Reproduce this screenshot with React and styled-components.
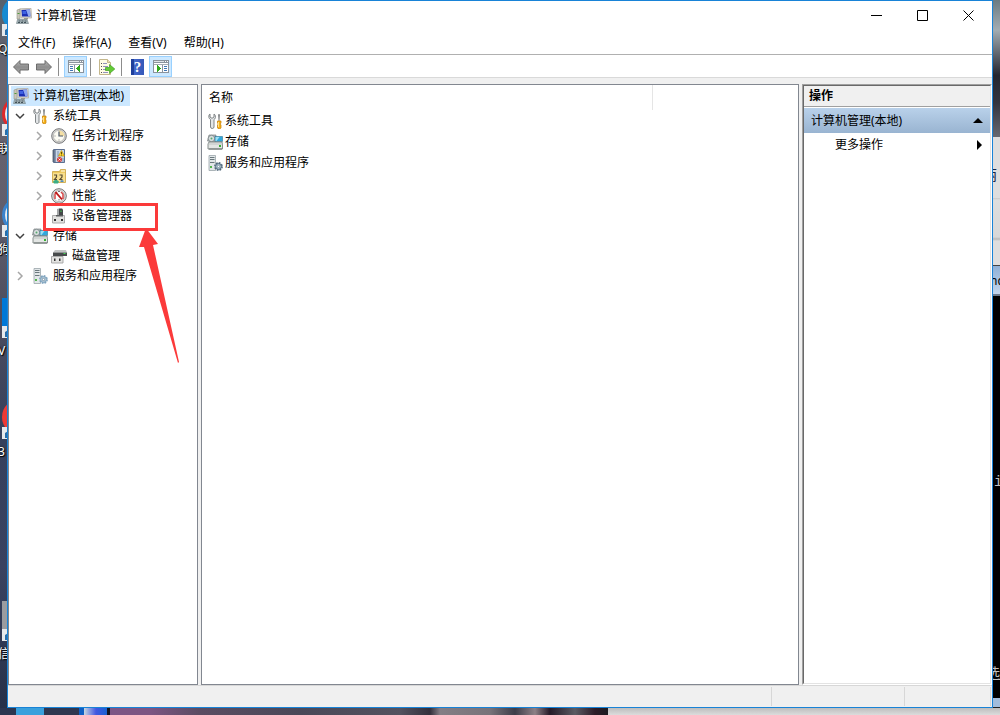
import React, { useState } from "react";
import styled, { createGlobalStyle, css } from "styled-components";

/* ---------- icons ---------- */

const ComputerIcon = () => (
  <Icon viewBox="0 0 16 16" aria-hidden="true">
    <path d="M1 2l3-1v10H1z" fill="#c9c6b8" stroke="#96948a" strokeWidth=".6" />
    <path d="M1.500 5h2v1h-2z" fill="#4c9a3d" />
    <path d="M4 .8L15 .3l.6 9.700H5z" fill="#dedbd0" stroke="#aaa89c" strokeWidth=".7" />
    <path d="M5.500 2L14 1.500l.4 7H6z" fill="#1b2fb4" />
    <path d="M10 1.800l4-.3.4 7h-2z" fill="#8fa8f0" />
    <path d="M6.500 3H10l.5 3h-4z" fill="#3f62e2" />
    <path d="M8 10h4v1.500H8z" fill="#9a988c" />
    <path d="M1.500 11.500H11l1.500 4H.5z" fill="#a9b8bd" stroke="#6d7d82" strokeWidth=".6" />
    <path d="M2.500 13h8M2 14.500h9" stroke="#44535a" strokeDasharray="2 1" />
  </Icon>
);

const ToolsIcon = () => (
  <Icon viewBox="0 0 16 16" aria-hidden="true">
    <path
      d="M3 1v3l2 1.300L7 4V1c2 1.300 2 4.300 0 5.500V14c0 2-3.500 2-3.500 0V6.500C1.300 5.300 1.300 2 3 1z"
      fill="#e3e6e8"
      stroke="#74797c"
      strokeWidth=".9"
    />
    <path d="M11.500 1h1l.5 1-.5 6h-1L11 2z" fill="#8a8d8f" />
    <path
      d="M10.500 8h3.500v2l-.8 1 .8 1v3c0 1-3.500 1-3.500 0v-3l.8-1-.8-1z"
      fill="#f6b21b"
      stroke="#c47b05"
      strokeWidth=".7"
    />
    <path d="M11.500 9v5" stroke="#ffe28a" />
  </Icon>
);

const ClockIcon = () => (
  <Icon viewBox="0 0 16 16" aria-hidden="true">
    <circle cx="8" cy="8" r="7.300" fill="#d6d6d4" stroke="#77787a" />
    <circle cx="8" cy="8" r="5.600" fill="#fdfcf4" stroke="#a3a3a1" strokeWidth=".6" />
    <path d="M8 8V2.500A5.500 5.500 0 0 1 13.500 8z" fill="#f4dfa4" />
    <path d="M8 3.500V8h4" fill="none" stroke="#4a5668" strokeWidth="1.200" />
    <path d="M3.500 8h1M8 11.500v1" stroke="#7b7b7b" />
  </Icon>
);

const EventIcon = () => (
  <Icon viewBox="0 0 16 16" aria-hidden="true">
    <path d="M2.500 1.500h11v13h-11z" fill="#8697b4" stroke="#5c6f90" />
    <path d="M5 2h8v12H5z" fill="#cbd8e6" />
    <path d="M6 4h2M6 6h2M6 8h2M11 11h2M11 13h2" stroke="#6887ae" strokeWidth=".8" />
    <path d="M1 3h3M1 5h3M1 7h3M1 9h3M1 11h3M1 13h3" stroke="#4d5968" strokeWidth=".8" />
    <path d="M10.500 2.500l3 5.500h-6z" fill="#ffd735" stroke="#b98b00" strokeWidth=".6" />
    <path d="M10.500 4v2M10.500 6.500v1" stroke="#3d3000" strokeWidth=".8" />
    <circle cx="8.500" cy="11.500" r="2.500" fill="#d83a35" />
    <path d="M7.500 10.500l2 2m0-2l-2 2" stroke="#fff" strokeWidth=".8" />
  </Icon>
);

const SharedIcon = () => (
  <Icon viewBox="0 0 16 16" aria-hidden="true">
    <path d="M1.500 3.500h7l1-2h5v13h-13z" fill="#efcb62" stroke="#c9a343" strokeWidth=".8" />
    <path d="M10 2.500h4v1h-4z" fill="#fffbe8" />
    <path d="M2 5h12v9H2z" fill="#f8df8e" />
    <path d="M3 7h2.500v2L3.500 11.500H6M8.500 7H11v2l-2 2.500h2.500" fill="none" stroke="#574c35" strokeWidth="1.200" />
    <path d="M2 13.500l2-1.500h2l2 1.500-1 2H3z" fill="#3bad86" />
    <path d="M9 13l2-1 2 1-1 1h-2z" fill="#4f8bc4" />
  </Icon>
);

const PerformanceIcon = () => (
  <Icon viewBox="0 0 16 16" aria-hidden="true">
    <circle cx="8" cy="8" r="7.300" fill="#e5e5e5" stroke="#727272" />
    <circle cx="8" cy="8" r="5.600" fill="#fff" stroke="#979797" strokeWidth=".6" />
    <path d="M4 11V6l2-2M12 11V6l-2-2" fill="none" stroke="#d34646" strokeWidth="1.500" />
    <path d="M4.500 4l6.500 7.500" stroke="#bc1818" strokeWidth="1.900" />
    <path d="M7 3.500h2M8 11v1.500" stroke="#777" />
  </Icon>
);

const DeviceIcon = () => (
  <Icon viewBox="0 0 16 16" aria-hidden="true">
    <path d="M6 1l2-.5V8H6z" fill="#a4a7a8" />
    <path d="M8 .5h3l1 1V9H8z" fill="#45484a" />
    <path d="M9.500 2.500h1v1.500h-1z" fill="#42d652" />
    <path d="M1.500 7.500h12v7.500h-12z" fill="#e2e2e0" stroke="#a3a3a3" strokeWidth=".9" />
    <path d="M5 7h7v1.500H5z" fill="#5c5f61" />
    <path d="M3 11h2v2H3zM10 11h2v2h-2z" fill="#343434" />
  </Icon>
);

const StorageIcon = () => (
  <Icon viewBox="0 0 16 16" aria-hidden="true">
    <path d="M.5 7L2 1h7l-1 7z" fill="#b4bbbd" stroke="#7c8284" strokeWidth=".7" />
    <circle cx="4.500" cy="4.500" r="3.200" fill="#d9dfdf" stroke="#758083" strokeWidth=".8" />
    <circle cx="4.500" cy="4.500" r="1" fill="#58a96e" />
    <path d="M8 2.500h7.500v5H8z" fill="#30a8dc" stroke="#347391" strokeWidth=".6" />
    <path d="M8.500 3h4l-3 4h-1z" fill="#9ce0f4" />
    <path d="M1 10l1-2h13l.5 2v5H1z" fill="#e3e6e4" stroke="#7b8382" strokeWidth=".9" />
    <path d="M1.500 10h14" stroke="#c0c5c4" />
    <path d="M12 11h2v2h-2z" fill="#35af32" />
    <path d="M2 15h13" stroke="#6d7472" />
  </Icon>
);

const DiskIcon = () => (
  <Icon viewBox="0 0 16 16" aria-hidden="true">
    <path d="M4 2h11l1 2.500H2z" fill="#c2c4c4" />
    <path d="M2 4.500h14V8H2z" fill="#484b4c" />
    <path d="M12.500 5h2v1h-2z" fill="#42d652" />
    <path d="M.5 8.500h11.500v6.500H.5z" fill="#e3e3e1" stroke="#a3a3a3" strokeWidth=".9" />
    <path d="M3 10.500h1.500V13H3zM8 10.500h1.500V13H8z" fill="#343434" />
  </Icon>
);

const ServiceIcon = ({ dark }) => (
  <Icon viewBox="0 0 16 16" aria-hidden="true">
    <path d="M2 .5h6.500v15H2z" fill="#e2e7e9" stroke="#9aa5a9" strokeWidth=".8" />
    <path d="M3 2.500h4.500M3 4.500h4.500M3 7.500h4.500" stroke="#6a787d" />
    <path d="M3 11h2v2H3z" fill="#52b44d" />
    <circle
      cx="11.500"
      cy="11.500"
      r="3.600"
      fill="#b3cbdc"
      stroke={dark ? "#4f6679" : "#7ea2bd"}
      strokeWidth="1.600"
      strokeDasharray="1.700 1.100"
    />
    <circle cx="11.500" cy="11.500" r="2.800" fill="#c5d8e4" stroke={dark ? "#4f6679" : "#7ea2bd"} />
    <circle cx="11.500" cy="11.500" r="1.200" fill="#fff" stroke="#56748a" strokeWidth=".7" />
  </Icon>
);

const ArrowIcon = ({ flip }) => (
  <Icon viewBox="0 0 16 16" aria-hidden="true">
    <defs>
      <linearGradient id="nav-arrow" x2="0" y2="1">
        <stop offset="0" stopColor="#b8b8b8" />
        <stop offset=".5" stopColor="#8e8e8e" />
        <stop offset="1" stopColor="#a9a9a9" />
      </linearGradient>
    </defs>
    <path
      d={
        flip
          ? "M15.500 8L9 1.500V5H.5v6H9v3.500z"
          : "M.5 8L7 1.500V5h8.500v6H7v3.500z"
      }
      fill="url(#nav-arrow)"
      stroke="#626262"
      strokeWidth=".9"
    />
  </Icon>
);

const PaneIcon = ({ right }) => (
  <Icon viewBox="0 0 16 16" shapeRendering="crispEdges" aria-hidden="true">
    <path d="M0 1h16v13H0z" fill="#8a939d" />
    <path d="M1 4h14v9H1z" fill="#fff" />
    <path d="M1 2h10v1H1z" fill="#dfe4e8" />
    <path d="M12 2h1v1h-1zM14 2h1v1h-1z" fill="#fff" />
    <path d="M1 5h14v1H1z" fill="#a5adb5" />
    {right ? (
      <>
        <path d="M9 6h1v7H9z" fill="#8a939d" />
        <path d="M11 7h3v1h-3zM11 9h3v1h-3zM11 11h3v1h-3z" fill="#3f76b5" />
        <path d="M4 6l4 3.500L4 13z" fill="#30a91c" />
      </>
    ) : (
      <>
        <path d="M6 6h1v7H6z" fill="#8a939d" />
        <path d="M2 7h3v1H2zM2 9h3v1H2zM2 11h3v1H2z" fill="#3f76b5" />
        <path d="M12 6L8 9.500l4 3.500z" fill="#30a91c" />
      </>
    )}
  </Icon>
);

const ExportIcon = () => (
  <Icon viewBox="0 0 16 16" aria-hidden="true">
    <path d="M.5.5h8l3 3v12H.5z" fill="#fffbe5" stroke="#c4b78c" />
    <path d="M8.500.5v3h3" fill="#e9dfb9" stroke="#c4b78c" />
    <path d="M2 4.500h1M2 7.500h1M2 10.500h1M2 13.500h1" stroke="#515151" />
    <path d="M4 4.500h4M4 7.500h5M4 10.500h4M4 13.500h5" stroke="#9392bb" />
    <path d="M6.500 8.500h4V5.500L15.800 10l-5.300 4.500v-3h-4z" fill="#63cb36" stroke="#3f9e21" strokeWidth=".7" />
  </Icon>
);

const Chevron = ({ open }) => (
  <ChevronSvg viewBox="0 0 10 10" aria-hidden="true">
    {open ? (
      <path d="M1 3l4 4 4-4" stroke="#404040" />
    ) : (
      <path d="M3 1l4 4-4 4" stroke="#a6a6a6" />
    )}
  </ChevronSvg>
);

/* ---------- data ---------- */

const menus = ["文件(F)", "操作(A)", "查看(V)", "帮助(H)"];

const tree = [
  {
    name: "系统工具",
    icon: <ToolsIcon />,
    open: true,
    children: [
      { name: "任务计划程序", icon: <ClockIcon />, more: true },
      { name: "事件查看器", icon: <EventIcon />, more: true },
      { name: "共享文件夹", icon: <SharedIcon />, more: true },
      { name: "性能", icon: <PerformanceIcon />, more: true },
      { name: "设备管理器", icon: <DeviceIcon />, marked: true },
    ],
  },
  {
    name: "存储",
    icon: <StorageIcon />,
    open: true,
    children: [{ name: "磁盘管理", icon: <DiskIcon /> }],
  },
  { name: "服务和应用程序", icon: <ServiceIcon />, more: true },
];

const rows = [
  { name: "系统工具", icon: <ToolsIcon /> },
  { name: "存储", icon: <StorageIcon /> },
  { name: "服务和应用程序", icon: <ServiceIcon dark /> },
];

const shortcuts = [
  { top: -4, name: "Q", color: "#168bd2" },
  { top: 96, name: "联", color: "#dd2a2c", ring: true },
  { top: 197, name: "狗", color: "#3d83cb", ring: true },
  { top: 298, name: "V", color: "#0078d7", square: true },
  { top: 399, name: "3", color: "#ee3a35" },
  { top: 601, name: "信", color: "#9b9ca0", square: true },
];

/* ---------- parts ---------- */

const TreeNode = ({ node, level }) => {
  const [open, setOpen] = useState(!!node.open);

  return (
    <li>
      <TreeRow $level={level}>
        <Toggle
          type="button"
          aria-label={node.name}
          disabled={!node.children && !node.more}
          onClick={() => setOpen(!open)}
        >
          {(node.children || node.more) && (
            <Chevron open={open && !!node.children} />
          )}
        </Toggle>
        <TreeLabel type="button">
          {node.icon}
          <span>{node.name}</span>
        </TreeLabel>
        {node.marked && (
          <>
            <MarkBox />
            <MarkArrow viewBox="0 0 42 136" aria-hidden="true">
              <path d="M8 0L20 16 15 17 41 134 40 135 6 19 1 19z" fill="#fb3a3a" />
            </MarkArrow>
          </>
        )}
      </TreeRow>
      {open && node.children && (
        <TreeList>
          {node.children.map((child) => (
            <TreeNode key={child.name} node={child} level={level + 1} />
          ))}
        </TreeList>
      )}
    </li>
  );
};

const App = () => {
  return (
    <>
      <GlobalStyle />
      <Desktop>
        <LeftEdge>
          {shortcuts.map((s) => (
            <Shortcut key={s.name} style={{ top: s.top }}>
              <ShortcutArt $color={s.color} $ring={s.ring} $square={s.square} />
              <ShortcutBadge viewBox="0 0 12 12" aria-hidden="true">
                <path d="M0 0h12v12H0z" fill="#e6e9ec" />
                <path d="M3 11V6l3-2h5v3H7L5 11z" fill="#2a6da8" />
              </ShortcutBadge>
              <ShortcutName>{s.name}</ShortcutName>
            </Shortcut>
          ))}
        </LeftEdge>

        <Window>
          <TitleBar>
            <ComputerIcon />
            <Title>计算机管理</Title>
            <Caption type="button" aria-label="最小化">
              <CaptionSvg viewBox="0 0 11 11">
                <path d="M0 5.500h11" />
              </CaptionSvg>
            </Caption>
            <Caption type="button" aria-label="最大化">
              <CaptionSvg viewBox="0 0 11 11">
                <path d="M.5.5h10v10H.5z" />
              </CaptionSvg>
            </Caption>
            <Caption type="button" aria-label="关闭">
              <CaptionSvg viewBox="0 0 11 11">
                <path d="M.5.5l10 10m0-10l-10 10" />
              </CaptionSvg>
            </Caption>
          </TitleBar>

          <MenuBar>
            {menus.map((m) => (
              <MenuButton key={m} type="button">
                {m}
              </MenuButton>
            ))}
          </MenuBar>

          <ToolBar>
            <ToolButton type="button" aria-label="后退">
              <ArrowIcon />
            </ToolButton>
            <ToolButton type="button" aria-label="前进">
              <ArrowIcon flip />
            </ToolButton>
            <Separator />
            <ToolButton type="button" aria-label="控制台树" $active>
              <PaneIcon />
            </ToolButton>
            <Separator />
            <ToolButton type="button" aria-label="导出列表">
              <ExportIcon />
            </ToolButton>
            <Separator />
            <ToolButton type="button" aria-label="帮助">
              <HelpBadge aria-hidden="true">?</HelpBadge>
            </ToolButton>
            <ToolButton type="button" aria-label="操作窗格" $active>
              <PaneIcon right />
            </ToolButton>
          </ToolBar>

          <Panes>
            <TreePane aria-label="控制台树">
              <RootLabel type="button">
                <ComputerIcon />
                <span>计算机管理(本地)</span>
              </RootLabel>
              <TreeList>
                {tree.map((node) => (
                  <TreeNode key={node.name} node={node} level={0} />
                ))}
              </TreeList>
            </TreePane>

            <ListPane>
              <Table>
                <thead>
                  <tr>
                    <HeadCell scope="col">名称</HeadCell>
                    <td />
                  </tr>
                </thead>
                <tbody>
                  {rows.map((row) => (
                    <tr key={row.name}>
                      <Cell>
                        <CellBody>
                          {row.icon}
                          {row.name}
                        </CellBody>
                      </Cell>
                      <td />
                    </tr>
                  ))}
                </tbody>
              </Table>
            </ListPane>

            <ActionPane>
              <ActionInner>
                <ActionTitle>操作</ActionTitle>
                <ActionGroup type="button">
                  计算机管理(本地)
                  <Triangle viewBox="0 0 10 10" aria-hidden="true">
                    <path d="M5 2l5 5H0z" />
                  </Triangle>
                </ActionGroup>
                <ActionItem type="button">
                  更多操作
                  <Triangle viewBox="0 0 10 10" aria-hidden="true">
                    <path d="M3 0l5 5-5 5z" />
                  </Triangle>
                </ActionItem>
              </ActionInner>
            </ActionPane>
          </Panes>

          <StatusBar>
            <StatusMain />
            <StatusCell $width={133} />
            <StatusCell $width={86} />
          </StatusBar>
        </Window>

        <RightEdge>
          <Photo />
          <BackPage>
            <PageChar>丽</PageChar>
          </BackPage>
          <ConsoleTitle>
            <span>nd</span>
          </ConsoleTitle>
          <ConsoleBody>
            <span>i</span>
            <u>选</u>
          </ConsoleBody>
          <ConsoleFoot />
        </RightEdge>

        <BottomEdge>
          <BottomArt />
        </BottomEdge>
      </Desktop>
    </>
  );
};

/* ---------- styles ---------- */

const GlobalStyle = createGlobalStyle`
  * {
    box-sizing: border-box;
  }
  body {
    margin: 0;
    font-family: "Noto Sans", "Noto Sans CJK SC", sans-serif;
    font-size: 12px;
    line-height: 20px;
    color: #000;
  }
  button {
    font: inherit;
    color: inherit;
    background: none;
    border: none;
    padding: 0;
    text-align: left;
  }
`;

const Icon = styled.svg`
  display: block;
  flex: none;
  width: 16px;
  height: 16px;
`;

const Desktop = styled.div`
  display: grid;
  grid-template-columns: 7px minmax(0, 1fr) 7px;
  grid-template-rows: 1fr 7px;
  min-height: 100vh;
  background: #2f3950;
`;

const LeftEdge = styled.div`
  position: relative;
  overflow: hidden;
  background: linear-gradient(
    #56616d,
    #6a6570 12%,
    #605e6c 30%,
    #4c4c5e 45%,
    #35405c 62%,
    #3a4260 80%,
    #273149
  );
`;

/* desktop shortcuts, mostly covered by the window */
const Shortcut = styled.div`
  position: absolute;
  left: 2px;
  width: 40px;
`;

const ShortcutArt = styled.div`
  width: 36px;
  height: 36px;
  border-radius: ${(p) => (p.$square ? "0" : "50%")};
  background: ${(p) => (p.$ring ? "#e8edf2" : p.$color)};
  border: ${(p) => (p.$ring ? "3px" : "0")} solid ${(p) => p.$color};
`;

const ShortcutBadge = styled.svg`
  position: absolute;
  left: 0;
  top: 28px;
  width: 12px;
  height: 12px;
`;

const ShortcutName = styled.div`
  margin: 7px 0 0 -4px;
  line-height: 20px;
  color: #fff;
  text-shadow: 1px 1px 1px #000, 0 0 2px #000;
`;

const Window = styled.main`
  display: flex;
  flex-direction: column;
  min-width: 0;
  border: 1px solid #1883d7;
  background: #fff;
`;

const TitleBar = styled.header`
  display: flex;
  align-items: center;
  height: 30px;
  padding-left: 8px;
`;

const Title = styled.h1`
  flex: 1;
  margin: 0 0 0 4px;
  font-size: 12px;
  font-weight: 400;
`;

const Caption = styled.button`
  display: flex;
  align-items: center;
  justify-content: center;
  width: 46px;
  height: 30px;
  padding: 0 1px 1px 0;

  &:hover {
    background: #e5e5e5;
  }
`;

const CaptionSvg = styled.svg`
  width: 11px;
  height: 11px;
  fill: none;
  stroke: #000;
  stroke-width: 1;
`;

const MenuBar = styled.nav`
  display: flex;
  align-items: center;
  gap: 1px;
  height: 24px;
  padding-left: 2px;
  border-bottom: 1px solid #b0b0b0;
`;

const MenuButton = styled.button`
  padding: 0 8px;

  &:hover {
    background: #e5f3ff;
  }
`;

const ToolBar = styled.div`
  display: flex;
  align-items: center;
  height: 23px;
  padding: 1px 0 0 1px;
  border-bottom: 1px solid #d9d9d9;
`;

const ToolButton = styled.button`
  display: flex;
  align-items: center;
  justify-content: center;
  width: 23px;
  height: 21px;
  border: 1px solid transparent;

  ${(p) =>
    p.$active &&
    css`
      background: #cce8ff;
      border-color: #99d1ff;
    `}
`;

const Separator = styled.div`
  width: 1px;
  height: 18px;
  margin: 0 4px 0 3px;
  background: #8c8c8c;

  &:first-of-type {
    margin-right: 5px;
  }
`;

const HelpBadge = styled.span`
  width: 13px;
  height: 16px;
  background: linear-gradient(90deg, #1f3f9b 3px, #4267ca 3px, #3457b8);
  color: #fff;
  font-family: "Liberation Serif", serif;
  font-size: 15px;
  font-weight: 700;
  line-height: 16px;
  text-align: center;
`;

const Panes = styled.div`
  flex: 1;
  display: grid;
  grid-template-columns: 190px minmax(0, 1fr) 190px;
  gap: 3px;
  padding-top: 6px;
  background: #f0f0f0;
`;

const TreePane = styled.nav`
  padding: 1px 0 0 2px;
  border: 1px solid #828790;
  background: #fff;
`;

const RootLabel = styled.button`
  display: flex;
  align-items: center;
  gap: 4px;
  height: 20px;
  padding: 0 6px 0 2px;
  background: #cce8ff;
`;

const TreeList = styled.ul`
  margin: 0;
  padding: 0;
  list-style: none;
`;

const TreeRow = styled.div`
  position: relative;
  display: flex;
  align-items: center;
  height: 20px;
  padding-left: ${(p) => p.$level * 19}px;
`;

const Toggle = styled.button`
  display: flex;
  align-items: center;
  justify-content: center;
  width: 19px;
  height: 20px;
  padding-right: 1px;
`;

const TreeLabel = styled.button`
  display: flex;
  align-items: center;
  gap: 5px;
  height: 20px;
  padding-left: 2px;
`;

const ChevronSvg = styled.svg`
  width: 10px;
  height: 10px;
  fill: none;
  stroke-width: 1.5;
`;

/* red highlight drawn over the tree */
const MarkBox = styled.div`
  position: absolute;
  z-index: 1;
  left: 32px;
  top: -3px;
  width: 115px;
  height: 28px;
  border: 3px solid #fb3a3a;
  pointer-events: none;
`;

const MarkArrow = styled.svg`
  position: absolute;
  z-index: 1;
  left: 127px;
  top: 22px;
  width: 42px;
  height: 136px;
  pointer-events: none;
`;

const ListPane = styled.section`
  border: 1px solid #828790;
  background: #fff;
`;

const Table = styled.table`
  width: 100%;
  table-layout: fixed;
  border-collapse: collapse;

  td {
    padding: 0;
  }
`;

const HeadCell = styled.th`
  width: 450px;
  height: 25px;
  padding: 0 0 0 7px;
  border-right: 1px solid #e5e5e5;
  font-weight: 400;
  text-align: left;
`;

const Cell = styled.td`
  height: 21px;
`;

const CellBody = styled.div`
  display: flex;
  align-items: center;
  gap: 2px;
  padding-left: 5px;
`;

const ActionPane = styled.aside`
  display: flex;
  border: 1px solid;
  border-color: #a0a0a0 #fff #fff #a0a0a0;
`;

const ActionInner = styled.div`
  flex: 1;
  display: flex;
  flex-direction: column;
  border: 1px solid;
  border-color: #696969 #e3e3e3 #e3e3e3 #696969;
  background: #fff;
`;

const ActionTitle = styled.h2`
  height: 21px;
  margin: 0 0 1px;
  padding-left: 5px;
  border-bottom: 1px solid #a0a0a0;
  background: #f0f0f0;
  font-size: 12px;
  font-weight: 700;
`;

const ActionGroup = styled.button`
  display: flex;
  align-items: center;
  justify-content: space-between;
  height: 25px;
  padding: 0 7px;
  background: linear-gradient(#b9d1ea, #99b4d1);
`;

const ActionItem = styled.button`
  display: flex;
  align-items: center;
  justify-content: space-between;
  height: 24px;
  padding: 0 6px 0 31px;
`;

const Triangle = styled.svg`
  width: 10px;
  height: 10px;
`;

const StatusBar = styled.footer`
  display: flex;
  height: 22px;
  padding: 1px 1px 1px 0;
  border-top: 1px solid #d7d7d7;
  background: #f0f0f0;
`;

const StatusMain = styled.div`
  flex: 1;
  border-right: 1px solid #d7d7d7;
`;

const StatusCell = styled.div`
  width: ${(p) => p.$width}px;
  border-right: 1px solid #d7d7d7;
`;

const RightEdge = styled.div`
  display: flex;
  flex-direction: column;
  overflow: hidden;
`;

const Photo = styled.div`
  height: 137px;
  background: linear-gradient(
    #6b7b82,
    #a3adb2 22%,
    #5d636d 40%,
    #23252f 55%,
    #33343e 75%,
    #666870
  );
`;

const BackPage = styled.div`
  height: 129px;
  padding-top: 28px;
  border-bottom: 1px solid #444;
  background: linear-gradient(
    #dedede 61px,
    #c8c8c8 61px,
    #dedede 63px,
    #d8d8d8 100px,
    #b9b9b9 102px,
    #dedede 104px
  );
`;

const PageChar = styled.div`
  width: 14px;
  margin-left: -10px;
  color: #1b2440;
  font-size: 14px;
`;

const ConsoleTitle = styled.div`
  height: 30px;
  padding-top: 5px;
  border-bottom: 2px solid #6c7a8c;
  background: linear-gradient(#8fb0d6, #c3d6ec);

  span {
    display: block;
    margin-left: -3px;
  }
`;

const ConsoleBody = styled.div`
  flex: 1;
  display: flex;
  flex-direction: column;
  justify-content: space-between;
  padding: 176px 0 14px 1px;
  background: #000;
  color: #c0c0c0;
  font-family: "Liberation Mono", "Noto Sans CJK SC", monospace;
  font-size: 14px;

  u {
    margin-left: -8px;
  }
`;

const ConsoleFoot = styled.div`
  height: 10px;
  border-bottom: 1px solid #222;
  background: #a2bddc;
`;

const BottomEdge = styled.div`
  grid-column: 1 / -1;
  display: flex;
  background: linear-gradient(#bdbdbd, #dcdcdc);
`;

const BottomArt = styled.div`
  width: 608px;
  background: linear-gradient(
    90deg,
    #2c3650 16px,
    #3aa0dc 16px,
    #3aa0dc 44px,
    #2f3750 44px,
    #2f3750 79px,
    #0f5fc4 79px,
    #0f5fc4 84px,
    #c8d8e0 84px,
    #4257e0 96px,
    #1a62d0 107px,
    #15151f 107px,
    #15151f 110px,
    #7d5585 110px,
    #7d5583 150px,
    #5a4c62 200px,
    #4a4858 300px,
    #53525f 400px,
    #33303c 430px,
    #847e85 440px,
    #78737a 490px,
    #3d3d49 515px,
    #8d8086 535px,
    #251a28 550px,
    #5b5b63 575px,
    #2c1c28 595px,
    #1c1c22 608px
  );
`;

export default App;
